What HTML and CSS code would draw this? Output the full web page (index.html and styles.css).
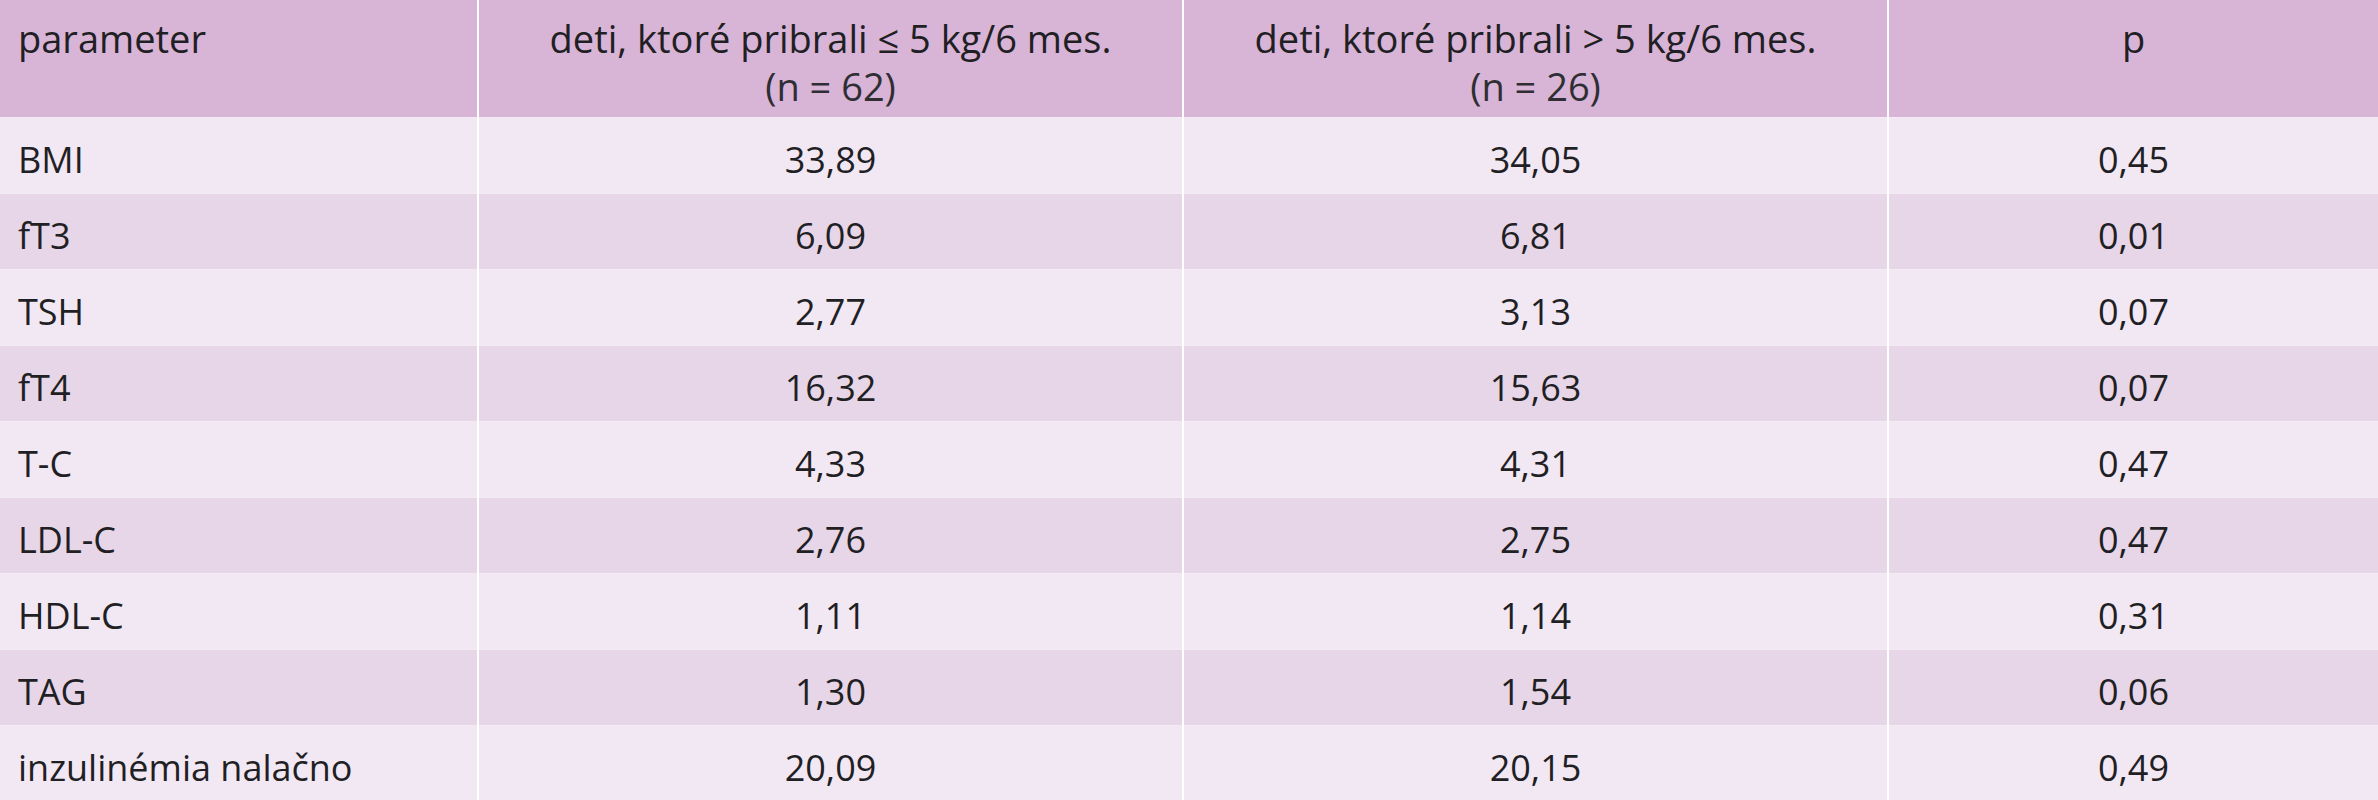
FILE: index.html
```html
<!DOCTYPE html>
<html lang="sk">
<head>
<meta charset="utf-8">
<title>Tabuľka</title>
<link rel="stylesheet" href="styles.css">
</head>
<body>
<table class="data">
  <colgroup>
    <col class="c1"><col class="c2"><col class="c3"><col class="c4">
  </colgroup>
  <thead>
    <tr>
      <th class="left">parameter</th>
      <th>deti, ktoré pribrali ≤ 5 kg/6 mes.<br><span class="n">(n = 62)</span></th>
      <th>deti, ktoré pribrali &gt; 5 kg/6 mes.<br><span class="n">(n = 26)</span></th>
      <th>p</th>
    </tr>
  </thead>
  <tbody>
    <tr><td class="left">BMI</td><td>33,89</td><td>34,05</td><td>0,45</td></tr>
    <tr><td class="left">fT3</td><td>6,09</td><td>6,81</td><td>0,01</td></tr>
    <tr><td class="left">TSH</td><td>2,77</td><td>3,13</td><td>0,07</td></tr>
    <tr><td class="left">fT4</td><td>16,32</td><td>15,63</td><td>0,07</td></tr>
    <tr><td class="left">T-C</td><td>4,33</td><td>4,31</td><td>0,47</td></tr>
    <tr><td class="left">LDL-C</td><td>2,76</td><td>2,75</td><td>0,47</td></tr>
    <tr><td class="left">HDL-C</td><td>1,11</td><td>1,14</td><td>0,31</td></tr>
    <tr><td class="left">TAG</td><td>1,30</td><td>1,54</td><td>0,06</td></tr>
    <tr><td class="left">inzulinémia nalačno</td><td>20,09</td><td>20,15</td><td>0,49</td></tr>
  </tbody>
</table>
</body>
</html>
```

FILE: styles.css
```css
html, body {
  margin: 0;
  padding: 0;
  background: #ffffff;
}

.data {
  width: 2378px;
  border-collapse: collapse;
  table-layout: fixed;
  font-family: "Open Sans", "Noto Sans", sans-serif;
  font-size: 36px;
  color: #1f1f24;
}

.c1 { width: 478px; }
.c2 { width: 705px; }
.c3 { width: 705px; }
.c4 { width: 490px; }

.data th,
.data td {
  text-align: center;
  vertical-align: top;
  font-weight: 400;
  border-left: 2px solid #ffffff;
}

.data th:first-child,
.data td:first-child {
  border-left: none;
}

.data th {
  background: #d8b4d7;
  font-size: 38px;
  line-height: 48px;
  padding: 14px 16px 7px;
  height: 96px;
}

.data td {
  line-height: 48px;
  padding: 18px 16px 9px;
  height: 48px;
  border-top: 1px solid #f4ebf5;
}

.data .left {
  text-align: left;
  padding-left: 18px;
}

.data tbody tr:nth-child(odd) td {
  background: #f2e8f4;
}

.data tbody tr:nth-child(even) td {
  background: #e7d5e8;
}

.n {
  color: #2e2e33;
}
```
